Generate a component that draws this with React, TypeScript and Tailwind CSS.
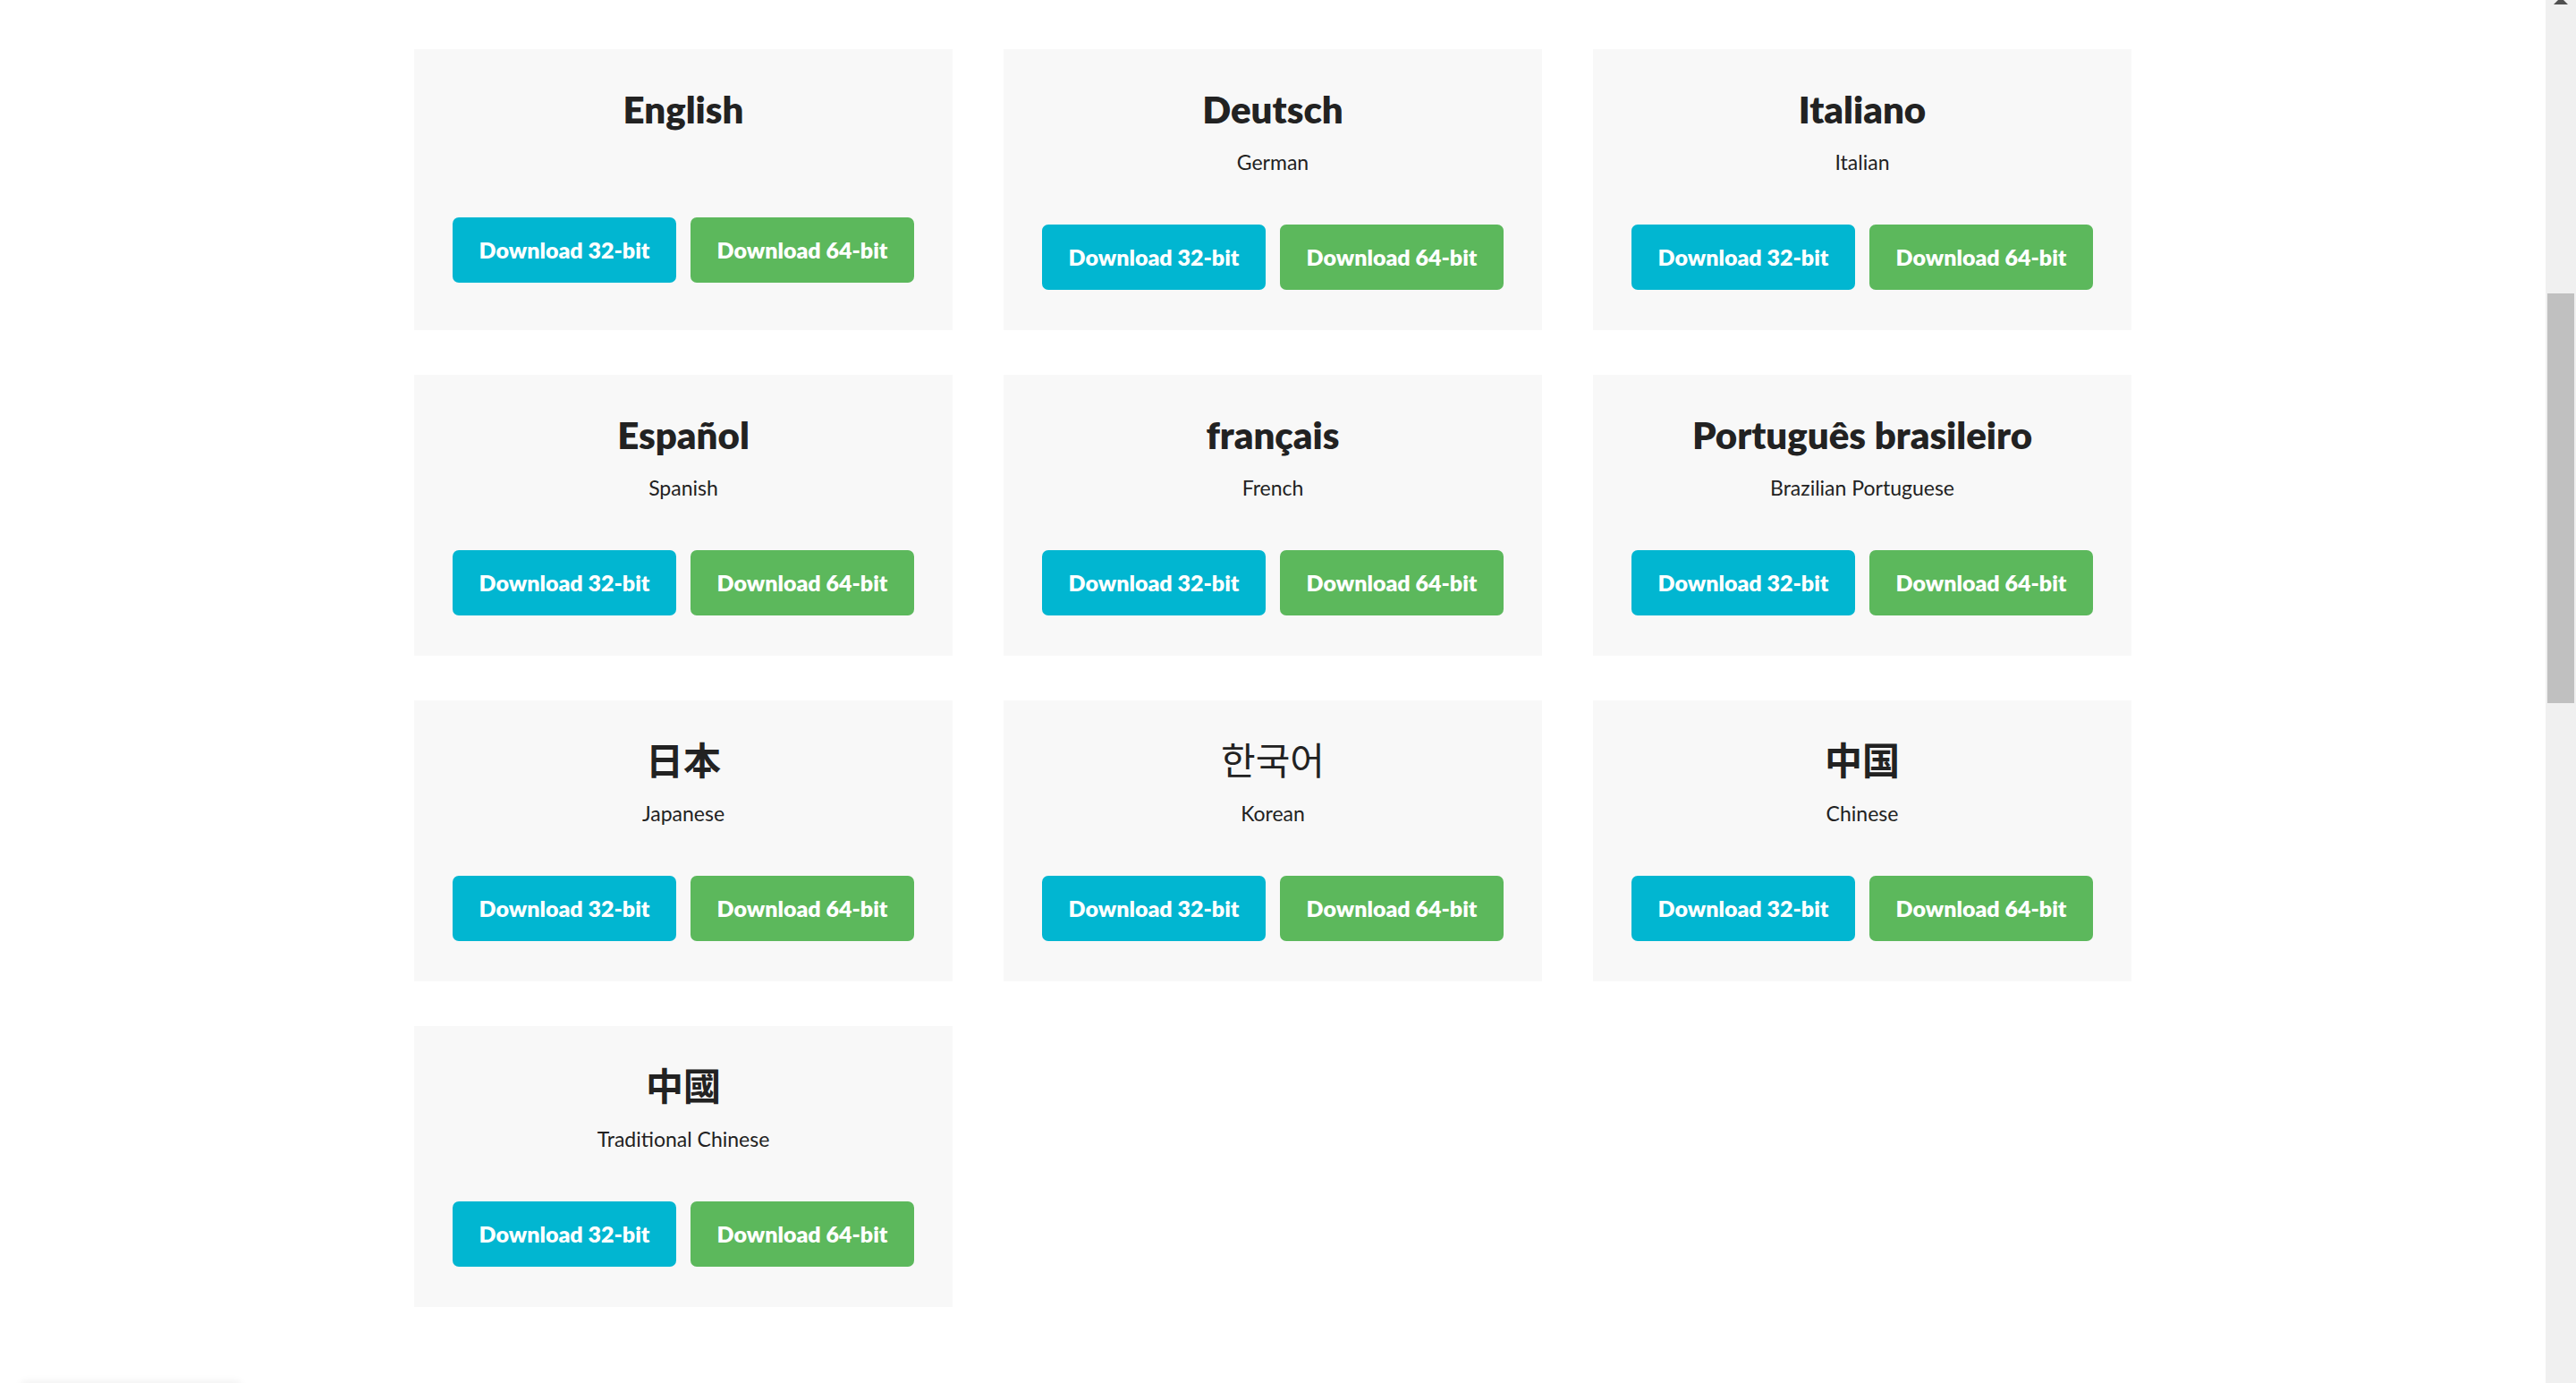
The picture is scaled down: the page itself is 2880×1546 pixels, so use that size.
import React from 'react';

type Lang = {
  name: string;
  sub?: string;
  font?: string;
};

const langs: Lang[] = [
  { name: 'English' },
  { name: 'Deutsch', sub: 'German' },
  { name: 'Italiano', sub: 'Italian' },
  { name: 'Español', sub: 'Spanish' },
  { name: 'français', sub: 'French' },
  { name: 'Português brasileiro', sub: 'Brazilian Portuguese' },
  { name: '日本', sub: 'Japanese', font: 'font-["Lato","Noto_Sans_CJK_JP",sans-serif] font-bold' },
  { name: '한국어', sub: 'Korean', font: 'font-["Lato","Noto_Sans_CJK_KR",sans-serif] font-normal' },
  { name: '中国', sub: 'Chinese', font: 'font-["Lato","Noto_Sans_CJK_SC",sans-serif] font-bold' },
  { name: '中國', sub: 'Traditional Chinese', font: 'font-["Lato","Noto_Sans_CJK_TC",sans-serif] font-bold' },
];

function LangCard({ lang }: { lang: Lang }) {
  return (
    <div className="flex flex-col items-center bg-[#f8f8f8] pt-[42px] pb-[45px]">
      <h3
        className={`text-[42px] leading-[50px] text-[#222] ${
          lang.font ?? 'font-["Lato","Noto_Sans",sans-serif] font-extrabold'
        }`}
      >
        {lang.name}
      </h3>
      {lang.sub ? (
        <p className="mt-[17px] text-[23px] leading-[35px] text-[#222]">{lang.sub}</p>
      ) : (
        <div className="h-[44px]" />
      )}
      <div className="mt-[52px] flex gap-[16px]">
        <button className="flex h-[73px] w-[250px] items-center justify-center rounded-[7px] bg-[#01b6d1] text-[25px] font-extrabold text-white">
          Download 32-bit
        </button>
        <button className="flex h-[73px] w-[250px] items-center justify-center rounded-[7px] bg-[#5cb85c] text-[25px] font-extrabold text-white">
          Download 64-bit
        </button>
      </div>
    </div>
  );
}

export default function App() {
  return (
    <div className='flex h-screen overflow-hidden bg-white font-["Lato","Noto_Sans",sans-serif]'>
      <main className="flex-1 pt-[55px]">
        <div className="mx-auto grid w-[1920px] grid-cols-3 gap-x-[57px] gap-y-[50px]">
          {langs.map((l) => (
            <LangCard key={l.name} lang={l} />
          ))}
        </div>
        {/* edge of the next section peeking in */}
        <div className="ml-[23px] mt-[86px] h-[40px] w-[247px] rounded-md bg-white shadow-[0_-3px_10px_rgba(0,0,0,0.06)]" />
      </main>

      <div className="flex w-[34px] flex-col items-center bg-[#f0f0f0]">
        <svg width="16" height="5" viewBox="0 0 16 5">
          <polygon points="5,0 11,0 16,5 0,5" fill="#505050" />
        </svg>
        <div className="mt-[323px] h-[458px] w-[30px] bg-[#c0c0c0]" />
      </div>
    </div>
  );
}
